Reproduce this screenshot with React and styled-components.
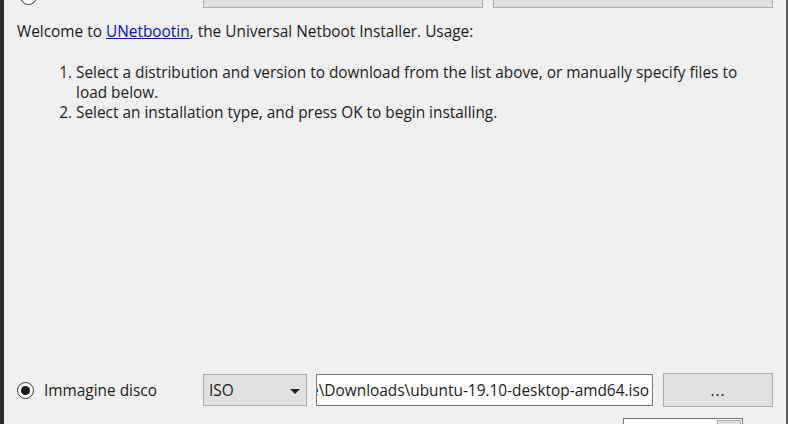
import React from "react";
import styled, { createGlobalStyle } from "styled-components";

const Global = createGlobalStyle`
  html, body { margin: 0; padding: 0; background: #f0f0f0; }
  body { font-family: "Open Sans", "Noto Sans", sans-serif; }
`;

const Frame = styled.div`
  width: 788px;
  height: 424px;
  box-sizing: border-box;
  overflow: hidden;
  background: #f0f0f0;
  border-left: 4px solid #2a2a2a;
  border-right: 2px solid #5a5a5a;
  display: flex;
  flex-direction: column;
  color: #1c1c1c;
  font-size: 15.4px;
`;

const TopRow = styled.div`
  margin-top: -22px;
  height: 30px;
  display: flex;
  align-items: flex-end;
`;

const RadioOuter = styled.span`
  box-sizing: border-box;
  width: 17px;
  height: 17px;
  border-radius: 50%;
  border: 1px solid #333;
  background: #fff;
  display: inline-flex;
  align-items: center;
  justify-content: center;
  flex-shrink: 0;
  &::after {
    content: "";
    width: 9px;
    height: 9px;
    border-radius: 50%;
    background: ${(p) => (p.checked ? "#1a1a1a" : "transparent")};
  }
`;

const Button = styled.div`
  box-sizing: border-box;
  width: ${(p) => p.w}px;
  height: ${(p) => p.h}px;
  background: #e1e1e1;
  border: 1px solid #adadad;
  display: flex;
  align-items: center;
  justify-content: center;
`;

const TopRadio = styled.div`
  margin-left: 16px;
  margin-right: 166px;
  margin-bottom: 3px;
  display: flex;
`;

const TopButtons = styled.div`
  display: flex;
  gap: 10px;
`;

const Intro = styled.p`
  margin: 14px 0 0 13px;
  line-height: 20px;
`;

const Link = styled.a`
  color: #0a0ae0;
  text-decoration: underline;
`;

const Steps = styled.ol`
  margin: 21px 0 0 0;
  padding-left: 72px;
  padding-right: 30px;
  line-height: 20px;
`;

const Spacer = styled.div`
  flex: 1;
`;

const DiskRow = styled.div`
  display: flex;
  align-items: center;
  height: 34px;
  padding-left: 13px;
`;

const Label = styled.label`
  display: flex;
  align-items: center;
  gap: 10px;
  width: 186px;
`;

const Select = styled.div`
  box-sizing: border-box;
  width: 104px;
  height: 32px;
  background: #e1e1e1;
  border: 1px solid #adadad;
  display: flex;
  align-items: center;
  justify-content: space-between;
  padding: 0 6px 0 5px;
`;

const Arrow = styled.span`
  width: 0;
  height: 0;
  border-left: 5px solid transparent;
  border-right: 5px solid transparent;
  border-top: 5px solid #222;
  margin-top: 2px;
`;

const PathInput = styled.div`
  box-sizing: border-box;
  width: 337px;
  height: 32px;
  margin-left: 9px;
  background: #fff;
  border: 1px solid #7a7a7a;
  display: flex;
  align-items: center;
  justify-content: flex-end;
  padding-right: 3px;
  white-space: nowrap;
  overflow: hidden;
`;

const Dots = styled(Button)`
  margin-left: 10px;
  letter-spacing: 1px;
`;

const LastRow = styled.div`
  display: flex;
  justify-content: flex-end;
  padding-right: 43px;
  margin-top: 11px;
  height: 6px;
  align-items: flex-start;
`;

const Spin = styled.div`
  box-sizing: border-box;
  width: 120px;
  height: 30px;
  background: #fff;
  border: 1px solid #7a7a7a;
  display: flex;
  justify-content: flex-end;
  padding: 1px;
`;

const SpinBtn = styled.div`
  width: 22px;
  background: #e1e1e1;
  border: 1px solid #adadad;
`;

export default function App() {
  return (
    <>
      <Global />
      <Frame>
        <TopRow>
          <TopRadio>
            <RadioOuter />
          </TopRadio>
          <TopButtons>
            <Button w={280} h={30} />
            <Button w={280} h={30} />
          </TopButtons>
        </TopRow>
        <Intro>
          Welcome to <Link href="#">UNetbootin</Link>, the Universal Netboot Installer. Usage:
        </Intro>
        <Steps>
          <li>
            Select a distribution and version to download from the list above, or manually
            specify files to load below.
          </li>
          <li>Select an installation type, and press OK to begin installing.</li>
        </Steps>
        <Spacer />
        <DiskRow>
          <Label>
            <RadioOuter checked />
            Immagine disco
          </Label>
          <Select>
            ISO
            <Arrow />
          </Select>
          <PathInput>C:\Users\utente\Downloads\ubuntu-19.10-desktop-amd64.iso</PathInput>
          <Dots w={110} h={34}>...</Dots>
        </DiskRow>
        <LastRow>
          <Spin>
            <SpinBtn />
          </Spin>
        </LastRow>
      </Frame>
    </>
  );
}
